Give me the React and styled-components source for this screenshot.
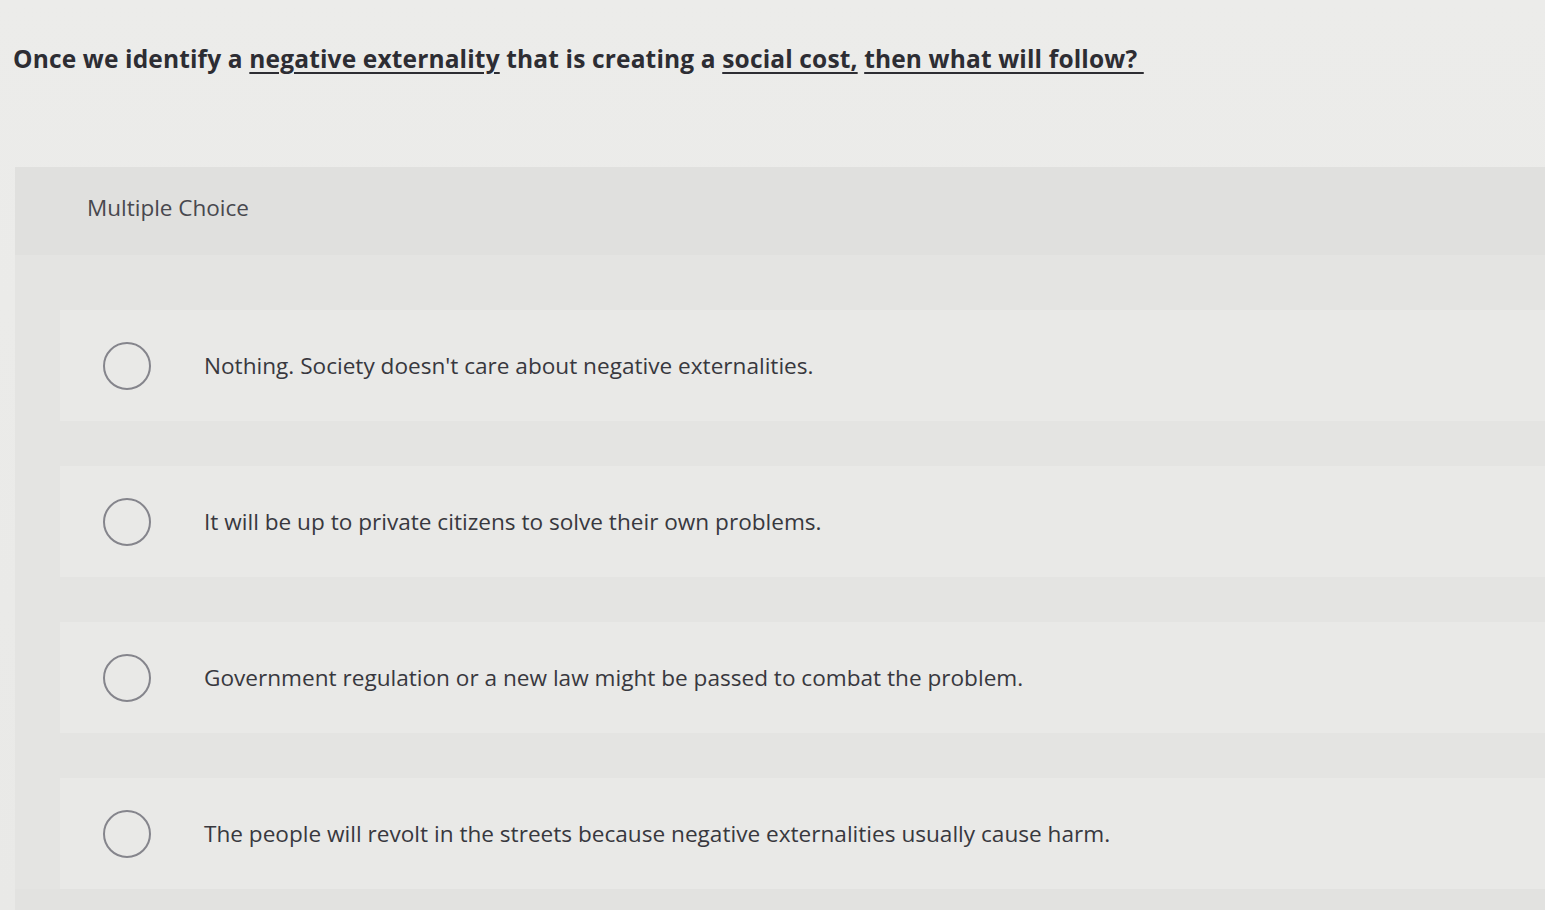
import React from "react";
import styled, { createGlobalStyle } from "styled-components";

const Global = createGlobalStyle`
  html, body { margin: 0; padding: 0; background: #ebebe9; }
  body { font-family: "Open Sans", "Lato", "Liberation Sans", sans-serif; overflow: hidden; }
`;

const Page = styled.div`
  width: 1545px;
  height: 910px;
  background: linear-gradient(180deg, #ececea 0%, #e9e9e7 100%);
  display: flex;
  flex-direction: column;
  overflow: hidden;
`;

const Question = styled.h1`
  margin: 0;
  padding: 41px 0 0 13px;
  height: 167px;
  box-sizing: border-box;
  flex: none;
  font-size: 24.5px;
  line-height: 36px;
  font-weight: 700;
  color: #2d2d33;
  letter-spacing: 0.15px;
  white-space: nowrap;
`;

const Term = styled.span`
  text-decoration: underline;
  text-decoration-thickness: 2px;
  text-underline-offset: 4px;
`;

const Panel = styled.section`
  margin-left: 15px;
  flex: 1;
  background: #e2e2e0;
  display: flex;
  flex-direction: column;
`;

const PanelHeader = styled.div`
  height: 88px;
  padding: 25px 0 0 72px;
  box-sizing: border-box;
  font-size: 22.5px;
  color: #48484e;
  background: #e0e0de;
`;

const Options = styled.div`
  display: flex;
  flex-direction: column;
  gap: 45px;
  padding: 55px 0 0 45px;
  background: #e4e4e2;
`;

const Option = styled.label`
  display: flex;
  align-items: center;
  height: 111px;
  padding-left: 43px;
  background: #e9e9e7;
  cursor: pointer;
`;

const Radio = styled.span`
  width: 44px;
  height: 44px;
  border-radius: 50%;
  border: 2px solid #85858c;
  flex: none;
  background: transparent;
`;

const OptionText = styled.span`
  margin-left: 53px;
  font-size: 22.6px;
  color: #38383e;
  white-space: nowrap;
`;

const choices = [
  "Nothing. Society doesn't care about negative externalities.",
  "It will be up to private citizens to solve their own problems.",
  "Government regulation or a new law might be passed to combat the problem.",
  "The people will revolt in the streets because negative externalities usually cause harm.",
];

export default function App() {
  return (
    <>
      <Global />
      <Page>
        <Question>
          Once we identify a <Term>negative externality</Term> that is creating a{" "}
          <Term>social cost,</Term> <Term>then what will follow?&nbsp;</Term>
        </Question>
        <Panel>
          <PanelHeader>Multiple Choice</PanelHeader>
          <Options>
            {choices.map((c) => (
              <Option key={c}>
                <Radio />
                <OptionText>{c}</OptionText>
              </Option>
            ))}
          </Options>
        </Panel>
      </Page>
    </>
  );
}
